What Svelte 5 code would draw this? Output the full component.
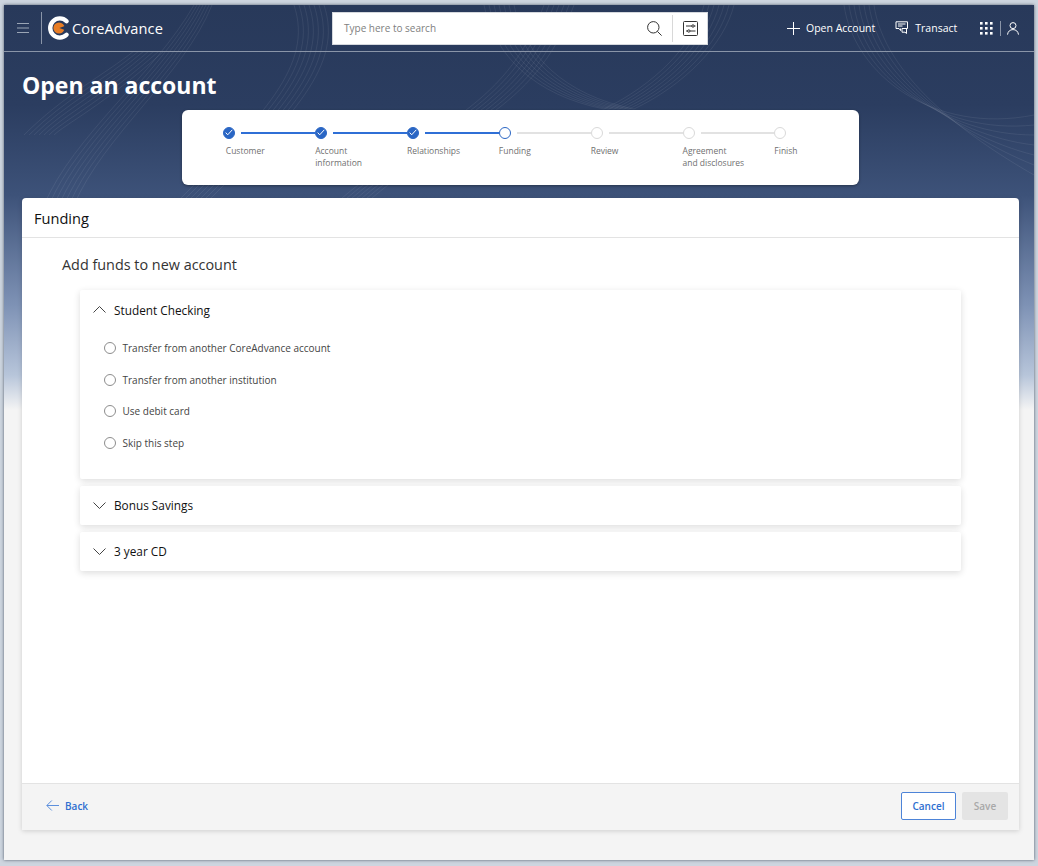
<script lang="ts">
  type Step = { label: string[]; state: "done" | "current" | "todo" };

  const steps: Step[] = [
    { label: ["Customer"], state: "done" },
    { label: ["Account", "information"], state: "done" },
    { label: ["Relationships"], state: "done" },
    { label: ["Funding"], state: "current" },
    { label: ["Review"], state: "todo" },
    { label: ["Agreement", "and disclosures"], state: "todo" },
    { label: ["Finish"], state: "todo" }
  ];

  const fundingOptions = [
    "Transfer from another CoreAdvance account",
    "Transfer from another institution",
    "Use debit card",
    "Skip this step"
  ];

  // concentric strands for the hero background
  const strands = Array.from({ length: 7 }, (_, i) => i * 5);
</script>

<div class="window">
  <svg class="waves" viewBox="0 0 1030 200" width="1030" height="200" fill="none" aria-hidden="true">
    {#each strands as s}
      <path d={`M${40 + s} 200 C ${70 + s} 130, ${150 + s} 70, ${190 + s * 0.6} 0`} />
      <path d={`M${170 + s} 200 C ${260 + s} 110, ${310 + s} 60, ${290 + s} 0`} />
      <path d={`M${330 + s} 200 C ${420 + s} 120, ${500 + s} 110, ${540 + s} 0`} />
      <path d={`M${840 + s} 0 C ${850 + s} 70, ${930 + s} 130, 1030 ${110 + s * 2}`} />
      <path d={`M${480 + s} 0 C ${490 + s} 50, ${530 + s} 90, ${600 + s} 104`} />
      <path d={`M${700 + s} 0 C ${690 + s} 40, ${650 + s} 80, ${600 + s} 104`} />
      <path d={`M${20 + s} 130 C 60 ${90 + s}, 100 ${70 + s}, ${130 + s} 46`} />
    {/each}
  </svg>

  <header class="topbar">
    <div class="brand">
      <svg class="menu" width="12" height="10" viewBox="0 0 12 10" aria-label="Menu">
        <path d="M0 .5h12M0 5h12M0 9.5h12" stroke="#9aa5b5" stroke-width="1" />
      </svg>
      <span class="brand-rule"></span>
      <svg class="logo" width="23" height="24" viewBox="0 0 23 24" aria-hidden="true">
        <path d="M19.6 5.2A9.6 9.6 0 1 0 19.6 18.8" fill="none" stroke="#fff" stroke-width="4.4" stroke-linecap="round" />
        <circle cx="12" cy="12" r="5.6" fill="#e87d25" />
        <path d="M12.4 12 18.4 9.8v4.4Z" fill="#28395a" />
      </svg>
      <span class="brand-name">CoreAdvance</span>
    </div>

    <div class="search">
      <span class="placeholder">Type here to search</span>
      <svg width="15" height="15" viewBox="0 0 15 15" fill="none" stroke="#333" stroke-width="1" aria-label="Search">
        <circle cx="6.3" cy="6.3" r="5.7" />
        <path d="m10.4 10.4 4.2 4.2" />
      </svg>
      <span class="search-rule"></span>
      <svg width="15" height="15" viewBox="0 0 15 15" fill="none" stroke="#333" stroke-width="1" aria-label="Filters">
        <rect x=".5" y=".5" width="14" height="14" rx="1" />
        <path d="M3 5h6M11 5h1.5M3 10h2M7 10h5.5" />
        <circle cx="10" cy="5" r="1.2" />
        <circle cx="5.8" cy="10" r="1.2" />
      </svg>
    </div>

    <nav class="actions">
      <button type="button" class="action">
        <svg width="13" height="13" viewBox="0 0 13 13" stroke="#fff" stroke-width="1"><path d="M6.5 0v13M0 6.5h13" /></svg>
        Open Account
      </button>
      <button type="button" class="action transact">
        <svg width="14" height="14" viewBox="0 0 14 14" fill="none" stroke="#fff" stroke-width="1">
          <path d="M1 .8h11.5v6.7h-2M1 .8v6.7h3l1.5 2V7.5" />
          <path d="M3 3h7.5M3 5h4.5" />
          <path d="M7 7.5h4.5v5l-1.5-1.3H7Z" />
        </svg>
        Transact
      </button>
      <svg class="grid-icon" width="13" height="13" viewBox="0 0 13 13" fill="#fff" aria-label="Apps">
        {#each [0, 5, 10] as y}
          {#each [0, 5, 10] as x}
            <rect {x} {y} width="2.6" height="2.6" />
          {/each}
        {/each}
      </svg>
      <span class="nav-rule"></span>
      <svg width="12" height="13" viewBox="0 0 12 13" fill="none" stroke="#fff" stroke-width="1" aria-label="Profile">
        <circle cx="6" cy="3.6" r="3" />
        <path d="M.5 12.6C1 9.3 3 7.6 6 7.6s5 1.7 5.5 5" />
      </svg>
    </nav>
  </header>

  <main class="page">
    <h1>Open an account</h1>

    <ol class="stepper">
      {#each steps as step, i}
        <li class="step {step.state}">
          <div class="track">
            <span class="dot">
              {#if step.state === "done"}
                <svg width="8" height="7" viewBox="0 0 8 7" fill="none" stroke="#fff" stroke-width="1"><path d="m.7 3.6 2 2.2L7.3.8" /></svg>
              {/if}
            </span>
            {#if i < steps.length - 1}
              <span class="line"></span>
            {/if}
          </div>
          <div class="step-label">
            {#each step.label as part}
              <span>{part}</span>
            {/each}
          </div>
        </li>
      {/each}
    </ol>

    <section class="panel">
      <h2>Funding</h2>
      <div class="panel-body">
        <h3>Add funds to new account</h3>

        <div class="accordion open">
          <div class="accordion-head">
            <svg width="13" height="7" viewBox="0 0 13 7" fill="none" stroke="#444" stroke-width="1"><path d="m.5 6.5 6-6 6 6" /></svg>
            <span>Student Checking</span>
          </div>
          <div class="options">
            {#each fundingOptions as option}
              <label class="option">
                <span class="radio"></span>
                {option}
              </label>
            {/each}
          </div>
        </div>

        <div class="accordion">
          <div class="accordion-head">
            <svg width="13" height="7" viewBox="0 0 13 7" fill="none" stroke="#444" stroke-width="1"><path d="m.5.5 6 6 6-6" /></svg>
            <span>Bonus Savings</span>
          </div>
        </div>

        <div class="accordion">
          <div class="accordion-head">
            <svg width="13" height="7" viewBox="0 0 13 7" fill="none" stroke="#444" stroke-width="1"><path d="m.5.5 6 6 6-6" /></svg>
            <span>3 year CD</span>
          </div>
        </div>
      </div>

      <footer class="panel-foot">
        <button type="button" class="back">
          <svg width="13" height="11" viewBox="0 0 13 11" fill="none" stroke="#5c8fdc" stroke-width="1"><path d="M13 5.5H1M5.8.5l-5 5 5 5" /></svg>
          Back
        </button>
        <div class="foot-actions">
          <button type="button" class="cancel">Cancel</button>
          <button type="button" class="save" disabled>Save</button>
        </div>
      </footer>
    </section>
  </main>
</div>

<style>
  :global(body) {
    margin: 0;
    background: #cdd5df;
    font-family: "Open Sans", "Liberation Sans", sans-serif;
  }

  .window {
    position: relative;
    display: flex;
    flex-direction: column;
    width: 1030px;
    height: 855px;
    margin: 5px 4px 6px;
    overflow: hidden;
    background: linear-gradient(180deg, #28395a 0, #2b3d60 100px, #3d5279 190px, #7e92b5 300px, #b7c5da 370px, #f4f4f4 405px);
    box-shadow: 0 0 3px rgba(40, 50, 70, 0.75);
  }

  .waves {
    position: absolute;
    top: 0;
    left: 0;
  }

  .waves path {
    stroke: rgba(255, 255, 255, 0.07);
    stroke-width: 1;
  }

  .topbar {
    position: relative;
    display: flex;
    flex: 0 0 auto;
    align-items: center;
    height: 46px;
    border-bottom: 1px solid #8a95a8;
    box-sizing: content-box;
  }

  .brand {
    display: flex;
    align-items: center;
    width: 328px;
    padding-left: 13px;
    box-sizing: border-box;
  }

  .brand-rule {
    width: 1px;
    height: 32px;
    margin: 0 5px 0 12px;
    background: #8a95a8;
  }

  .brand-name {
    margin-left: 2px;
    color: #fff;
    font-size: 14.6px;
    letter-spacing: 0.1px;
  }

  .search {
    display: flex;
    align-items: center;
    width: 376px;
    height: 33px;
    padding: 0 9px 0 11px;
    box-sizing: border-box;
    background: #fff;
    border: 1px solid #d5d8dd;
  }

  .placeholder {
    flex: 1;
    color: #808080;
    font-size: 10px;
  }

  .search-rule {
    width: 1px;
    height: 27px;
    margin: 0 10px;
    background: #d8d8d8;
  }

  .actions {
    display: flex;
    align-items: center;
    margin-left: 79px;
  }

  .action {
    display: flex;
    align-items: center;
    gap: 6px;
    padding: 0;
    border: 0;
    background: none;
    color: #fff;
    font: 500 10.5px "Open Sans", sans-serif;
  }

  .transact {
    margin-left: 20px;
    gap: 6px;
  }

  .grid-icon {
    margin-left: 23px;
  }

  .nav-rule {
    width: 1px;
    height: 15px;
    margin: 0 6px 0 7px;
    background: #8a95a8;
  }

  .page {
    position: relative;
    display: flex;
    flex: 1;
    flex-direction: column;
    min-height: 0;
    padding: 0 15px 30px 18px;
  }

  h1 {
    margin: 16px 0 0;
    color: #fff;
    font-size: 23px;
    font-weight: 700;
    line-height: 35px;
  }

  .stepper {
    display: flex;
    align-self: center;
    width: 677px;
    height: 75px;
    margin: 7px 0 0;
    padding: 16.5px 0 0 41.3px;
    box-sizing: border-box;
    list-style: none;
    background: #fff;
    border-radius: 6px;
    box-shadow: 0 1px 3px rgba(0, 0, 0, 0.35);
  }

  .step {
    width: 91.85px;
    flex: 0 0 auto;
  }

  .step:first-child .step-label {
    padding-left: 2.5px;
  }

  .track {
    display: flex;
    align-items: center;
    gap: 6px;
    height: 12px;
  }

  .dot {
    display: flex;
    flex: 0 0 auto;
    align-items: center;
    justify-content: center;
    width: 12px;
    height: 12px;
    box-sizing: border-box;
    border-radius: 50%;
    border: 1px solid #d9d9d9;
    background: #fff;
  }

  .done .dot {
    border-color: #2a66c4;
    background: #2a66c4;
  }

  .current .dot {
    border: 1.5px solid #2a66c4;
  }

  .line {
    width: 74px;
    height: 2px;
    background: #e2e2e2;
  }

  .done .line {
    background: #2f6fd6;
  }

  .step-label {
    display: flex;
    flex-direction: column;
    margin-top: 6.5px;
    color: #707070;
    font-size: 8.5px;
    line-height: 11.5px;
    white-space: nowrap;
  }

  .panel {
    display: flex;
    flex: 1;
    flex-direction: column;
    min-height: 0;
    margin: 13px 0 0;
    overflow: hidden;
    background: #fff;
    border-radius: 4px 4px 0 0;
    box-shadow: 0 1px 5px rgba(0, 0, 0, 0.16);
  }

  h2 {
    flex: 0 0 auto;
    height: 39px;
    margin: 0;
    padding-left: 12px;
    border-bottom: 1px solid #e3e3e3;
    color: #111;
    font-size: 14.6px;
    font-weight: 500;
    line-height: 41px;
  }

  .panel-body {
    flex: 1;
    padding: 0 58px 0 58px;
  }

  h3 {
    margin: 17px 0 15px -18px;
    color: #333;
    font-size: 14.4px;
    font-weight: 400;
    line-height: 20px;
  }

  .accordion {
    margin-bottom: 7px;
    background: #fff;
    border-radius: 2px;
    box-shadow: 0 2px 7px rgba(0, 0, 0, 0.14);
  }

  .accordion-head {
    display: flex;
    align-items: center;
    gap: 8px;
    height: 39px;
    padding-left: 13px;
    color: #111;
    font-size: 11.8px;
    font-weight: 500;
  }

  .options {
    display: flex;
    flex-direction: column;
    gap: 12.67px;
    padding: 9.5px 0 26.5px 24px;
  }

  .option {
    display: flex;
    align-items: center;
    gap: 6.5px;
    height: 19px;
    color: #444;
    font-size: 10px;
  }

  .radio {
    width: 12px;
    height: 12px;
    box-sizing: border-box;
    border: 1px solid #8d8d8d;
    border-radius: 50%;
  }

  .panel-foot {
    display: flex;
    flex: 0 0 auto;
    align-items: center;
    justify-content: space-between;
    height: 45px;
    padding: 0 11px 3px 24px;
    border-top: 1px solid #e3e3e3;
    background: #f4f4f4;
    box-sizing: content-box;
    height: 43px;
  }

  .back {
    display: flex;
    align-items: center;
    gap: 6px;
    padding: 0;
    border: 0;
    background: none;
    color: #2e6fd0;
    font: 600 10px "Open Sans", sans-serif;
  }

  .foot-actions {
    display: flex;
    gap: 6px;
  }

  .foot-actions button {
    height: 28px;
    padding: 0;
    border-radius: 2px;
    font: 600 10px "Open Sans", sans-serif;
  }

  .cancel {
    width: 55px;
    border: 1px solid #4d84d8;
    background: #fff;
    color: #2e6fd0;
  }

  .save {
    width: 46px;
    border: 0;
    background: #e4e4e4;
    color: #a8a8a8;
  }
</style>
